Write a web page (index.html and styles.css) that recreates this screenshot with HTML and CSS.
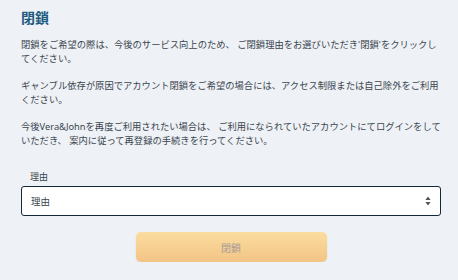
FILE: index.html
```html
<!DOCTYPE html>
<html lang="ja">
<head>
    <meta charset="UTF-8">
    <meta name="viewport" content="width=device-width, initial-scale=1.0">
    <title>閉鎖</title>
    <link rel="stylesheet" href="styles.css">
</head>
<body>
    <!-- 閉鎖フォーム -->
    <div class="closure">
        <h2 class="closure-title">閉鎖</h2>
        <p>閉鎖をご希望の際は、今後のサービス向上のため、 ご閉鎖理由をお選びいただき'閉鎖'をクリックしてください。</p>
        <p>ギャンブル依存が原因でアカウント閉鎖をご希望の場合には、アクセス制限または自己除外をご利用ください。</p>
        <p>今後Vera&amp;Johnを再度ご利用されたい場合は、 ご利用になられていたアカウントにてログインをしていただき、 案内に従って再登録の手続きを行ってください。</p>

        <label class="field-label" for="reason">理由</label>
        <div class="select-wrap">
            <select id="reason" class="reason-select">
                <option>理由</option>
            </select>
            <svg class="select-arrows" width="6" height="10" viewBox="0 0 6 10">
                <path d="M3 0.5 L5.6 4 H0.4 Z" fill="#555"/>
                <path d="M3 9.5 L5.6 6 H0.4 Z" fill="#555"/>
            </svg>
        </div>

        <div class="actions">
            <button class="close-btn" disabled>閉鎖</button>
        </div>
    </div>
</body>
</html>
```

FILE: styles.css
```css
/* 全体 */
body {
    margin: 0;
    padding: 0;
    background-color: #eef1f5;
    font-family: 'Noto Sans', 'Noto Sans CJK JP', sans-serif;
    color: #3b4650;
}

.closure {
    width: 420px;
    padding: 8px 0 0 21px;
}

.closure-title {
    margin: 0 0 11px;
    font-size: 14px;
    line-height: 19px;
    font-weight: bold;
    color: #1d5a80;
}

.closure p {
    margin: 0 0 13px;
    font-size: 9.3px;
    line-height: 14px;
}

/* 理由 */
.field-label {
    display: block;
    margin: 22px 0 2px 9px;
    font-size: 9px;
    line-height: 14px;
    color: #3b4650;
}

.select-wrap {
    position: relative;
}

.reason-select {
    display: block;
    width: 100%;
    height: 30px;
    padding: 0 0 0 9px;
    appearance: none;
    -webkit-appearance: none;
    background-color: #fff;
    border: 1.5px solid #13293a;
    border-radius: 3px;
    font-family: 'Noto Sans', 'Noto Sans CJK JP', sans-serif;
    font-size: 9.5px;
    color: #3b4650;
}

.select-arrows {
    position: absolute;
    right: 10px;
    top: 10px;
    pointer-events: none;
}

/* ボタン */
.actions {
    display: flex;
    justify-content: center;
    margin-top: 16px;
}

.close-btn {
    width: 191px;
    height: 30px;
    border: none;
    border-radius: 5px;
    background: linear-gradient(#fbdd9f, #f3c486);
    box-shadow: 0 1px 2px rgba(0, 0, 0, 0.08);
    font-family: 'Noto Sans', 'Noto Sans CJK JP', sans-serif;
    font-size: 10px;
    color: #a59a98;
}
```
